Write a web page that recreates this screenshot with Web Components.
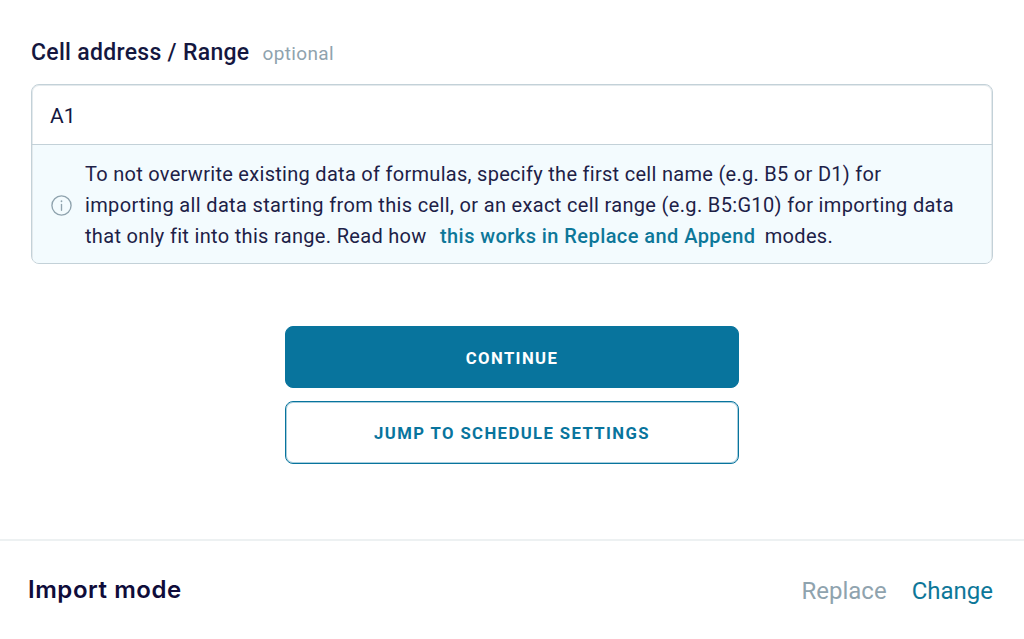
<!DOCTYPE html>
<html><head><meta charset="utf-8"><style>
html,body{margin:0;padding:0;background:#fff}
body{width:1024px;height:639px;overflow:hidden;font-family:Roboto,"Liberation Sans",sans-serif;color:#14173f}
</style></head><body>
<import-page>
<field-label hint="optional">Cell address / Range</field-label>
<range-box value="A1"><span style="letter-spacing:.29px">To not overwrite existing data of formulas, specify the first cell name (e.g. B5 or D1) for</span><br><span style="letter-spacing:.34px">importing all data starting from this cell, or an exact cell range (e.g. B5:G10) for importing data</span><br>that only fit into this range. Read how <a>this works in Replace and Append</a> modes.</range-box>
<action-button kind="primary">CONTINUE</action-button>
<action-button kind="outline">JUMP TO SCHEDULE SETTINGS</action-button>
<summary-row value="Replace" action="Change">Import mode</summary-row>
</import-page>
<script>
function def(name,html,init){customElements.define(name,class extends HTMLElement{constructor(){super();const r=this.attachShadow({mode:'open'});r.innerHTML=html;}connectedCallback(){init&&init(this,this.shadowRoot)}})}
def('import-page',`<style>:host{display:flex;flex-direction:column;width:1024px;height:639px;box-sizing:border-box;padding-top:37px}
.main{padding:0 31px;display:flex;flex-direction:column}
.btns{display:flex;flex-direction:column;gap:13px;width:454px;align-self:center;margin-top:62px}
.foot{margin-top:75px}</style>
<div class="main"><slot name="field"></slot><slot name="box"></slot><div class="btns"><slot name="btn"></slot></div></div><div class="foot"><slot name="foot"></slot></div>`,(h)=>{
 for(const c of h.children){const n=c.localName;c.slot=n==='field-label'?'field':n==='range-box'?'box':n==='action-button'?'btn':'foot'}
});
def('field-label',`<style>:host{display:flex;align-items:baseline;gap:13px;box-sizing:border-box;height:47px;padding-top:1px;font-size:23px;line-height:30px;font-weight:500;letter-spacing:.3px;color:#14173f}
.o{font-size:19px;font-weight:400;color:#8fa3ae;letter-spacing:.35px}</style><slot></slot><span class="o"></span>`,(h,r)=>{r.querySelector('.o').textContent=h.getAttribute('hint')});
def('range-box',`<style>:host{display:block;box-sizing:border-box;height:180px;border:1px solid #c3d1d8;box-shadow:inset 0 0 0 1px rgba(195,209,216,.45);border-radius:8px;overflow:hidden;background:#fff}
.v{height:60px;box-sizing:border-box;padding:3px 0 0 18px;display:flex;align-items:center;font-size:21px;color:#14173f;border-bottom:1px solid #c3d1d8}
.n{display:flex;align-items:center;height:118px;box-sizing:border-box;padding-top:3px;background:#f3fbfe;padding-left:18px;gap:12px;margin:0 1px 1px}
svg{flex:none;width:23px;height:23px;margin-left:-1px}
.t{font-size:20px;line-height:31px;letter-spacing:.32px;color:#1d2147}
::slotted(a){color:#0d7799;font-weight:500;margin:0 4px 0 8px;letter-spacing:.43px}</style>
<div class="v"></div><div class="n"><svg viewBox="0 0 24 24" fill="none" stroke="#8fa3ae" stroke-width="1.4"><circle cx="12" cy="12" r="10"/><path d="M12 11v6" stroke-linecap="round"/><path d="M12 7.4v.2" stroke-linecap="round" stroke-width="1.8"/></svg><div class="t"><slot></slot></div></div>`,(h,r)=>{r.querySelector('.v').textContent=h.getAttribute('value')});
def('action-button',`<style>:host{display:flex;box-sizing:border-box;align-items:center;justify-content:center;height:62px;padding-top:2px;border-radius:8px;font-size:16.7px;font-weight:700;letter-spacing:1.4px;border:1px solid #08749d}
:host([kind=primary]){background:#08749d;color:#fff}
:host([kind=outline]){background:#fff;color:#08749d;height:63px;box-shadow:inset 0 0 0 1px rgba(8,116,157,.35)}</style><slot></slot>`);
def('summary-row',`<style>:host{display:flex;align-items:center;box-sizing:border-box;height:100px;border-top:2px solid #edf1f2;padding:0 31px 2px 28px;font-family:Inter,sans-serif;color:#0f0c3a}
.l{font-size:24px;font-weight:600;letter-spacing:.55px;flex:1}
.v{font-family:Roboto,sans-serif;font-size:24px;color:#8fa3ae;margin-top:4px}
.a{font-family:Roboto,sans-serif;font-size:24px;color:#0d7799;margin:4px 0 0 25px}</style><span class="l"><slot></slot></span><span class="v"></span><span class="a"></span>`,(h,r)=>{r.querySelector('.v').textContent=h.getAttribute('value');r.querySelector('.a').textContent=h.getAttribute('action')});
</script>
</body></html>
